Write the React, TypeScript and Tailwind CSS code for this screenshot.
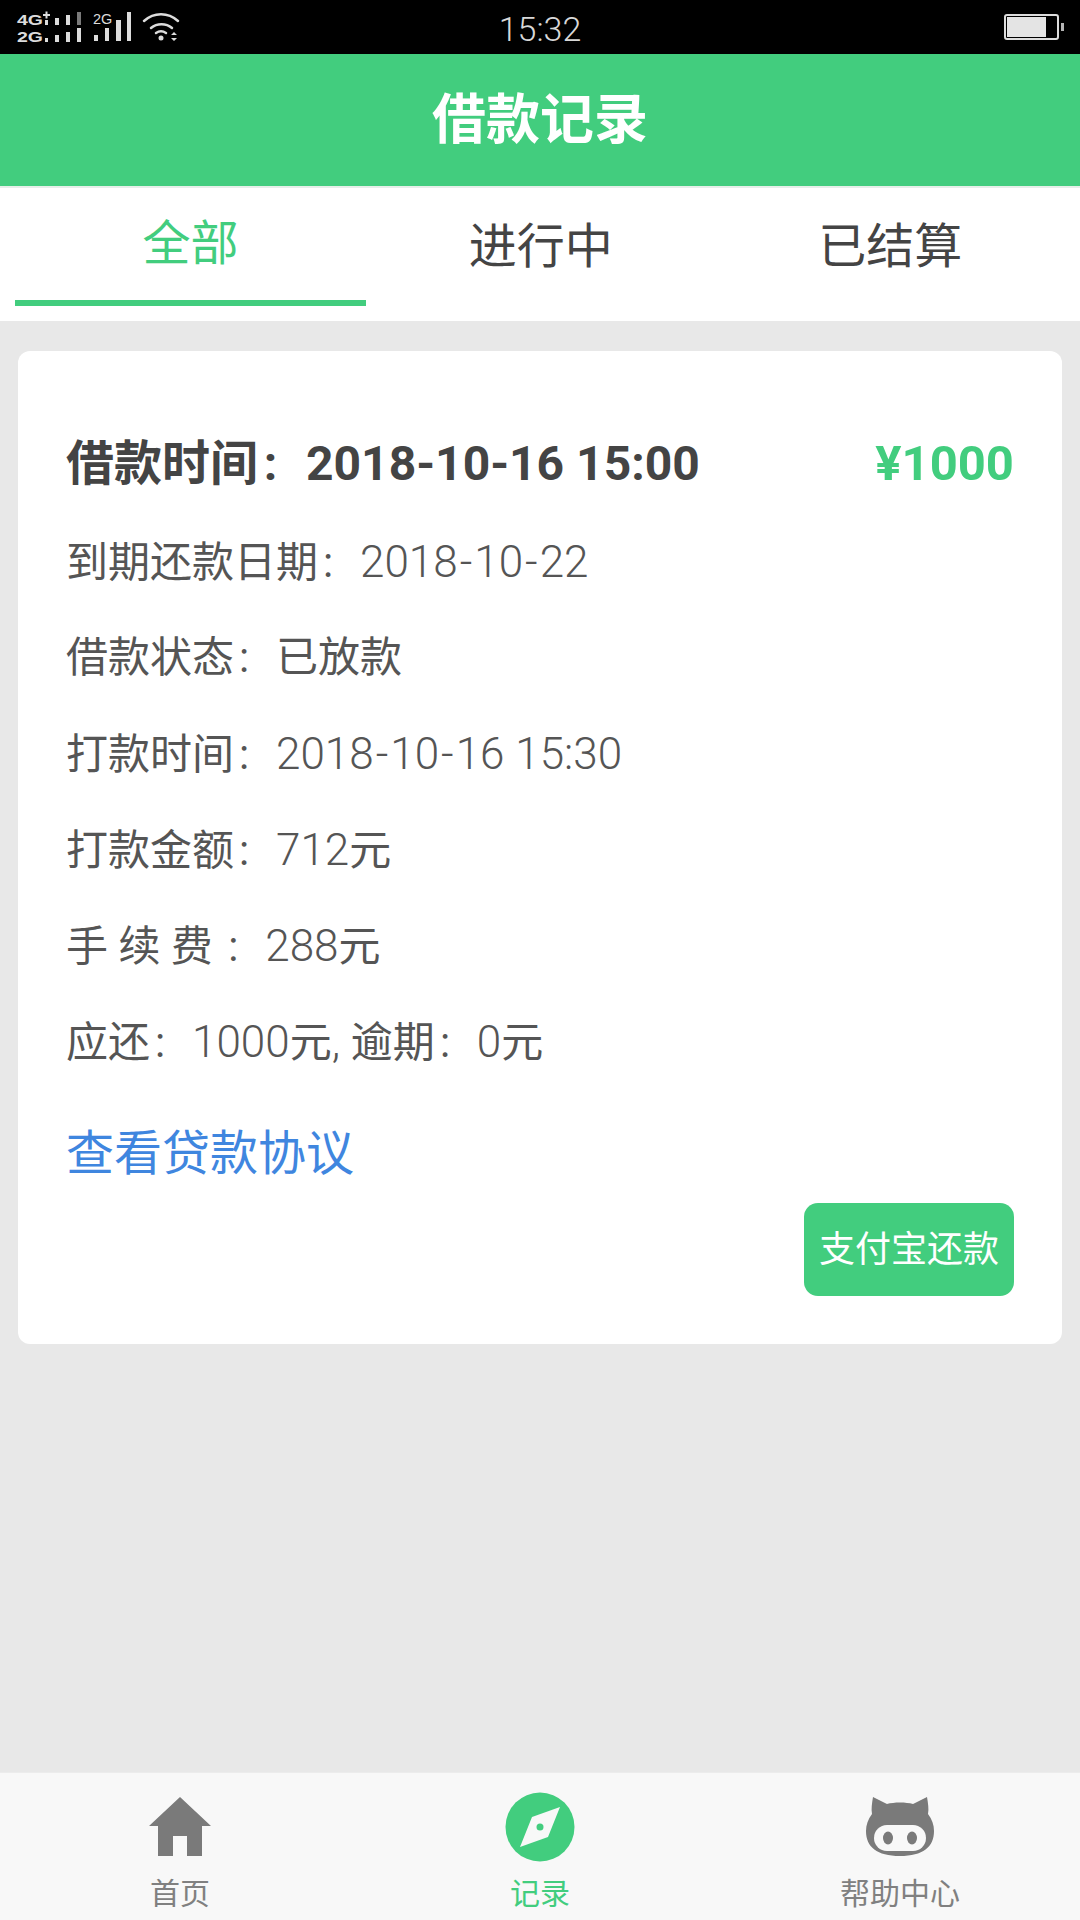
import React from "react";

function Signal() {
  return (
    <svg width="190" height="54" viewBox="0 0 190 54" className="block">
      <g fill="#dcdcdc">
        <text x="17" y="24.500" fontFamily="Liberation Sans" fontWeight="700" fontSize="15" textLength="26" lengthAdjust="spacingAndGlyphs">4G</text>
        <text x="17" y="41.500" fontFamily="Liberation Sans" fontWeight="700" fontSize="15" textLength="26" lengthAdjust="spacingAndGlyphs">2G</text>
        <path d="M43 14h7v2h-7zM45.500 11.500h2v7h-2z" />
        <rect x="45" y="20" width="3" height="5" />
        <rect x="45" y="38" width="3" height="4" />
        <rect x="55" y="18" width="4" height="7" />
        <rect x="66" y="15" width="4" height="10" />
        <rect x="77" y="12" width="4" height="13" fill="#7a7a7a" />
        <rect x="55" y="35" width="4" height="7" />
        <rect x="66" y="32" width="4" height="10" />
        <rect x="77" y="28" width="4" height="14" />
        <text x="93" y="24" fontFamily="Liberation Sans" fontWeight="400" fontSize="14.500">2G</text>
        <rect x="94" y="35" width="4" height="6" />
        <rect x="105" y="28" width="4" height="13" />
        <rect x="116" y="20" width="5" height="21" />
        <rect x="127" y="12" width="4" height="29" />
        <circle cx="161" cy="38" r="2.500" />
        <path d="M171 35l3-3 3 3zM171 38h6l-3 3z" />
      </g>
      <g fill="none" stroke="#dcdcdc" strokeWidth="2.500" strokeLinecap="round">
        <path d="M144 21c10-9 24-9 34 0" />
        <path d="M151 28c6-5 15-5 21 0" />
        <path d="M156 33c3-2 7-2 10 0" />
      </g>
    </svg>
  );
}

function Battery() {
  return (
    <div className="mr-[16px] flex items-center">
      <div className="h-[26px] w-[55px] rounded-[3px] border-2 border-[#dcdcdc] p-[1px]">
        <div className="h-full w-[39px] bg-[#e4e4e4]" />
      </div>
      <div className="ml-[2px] h-[8px] w-[3px] bg-[#b5b5b5]" />
    </div>
  );
}

function Colon() {
  return <span className="inline-block w-[1em] pl-[0.12em]">:</span>;
}

function L({ children }: { children: React.ReactNode }) {
  return <span className="text-[44px] font-light">{children}</span>;
}

function Dash() {
  return <span className="px-[2px]">-</span>;
}

function Row({ children }: { children: React.ReactNode }) {
  return <div className="h-[96px] whitespace-pre text-[42px] leading-[96px] text-[#555555]">{children}</div>;
}

function HomeIcon() {
  return (
    <svg width="64" height="60" viewBox="0 0 64 60" className="block">
      <path fill="#7a7a7a" fillRule="evenodd" d="M32 0 L63 29 H54 V59 H39 V39 H25 V59 H10 V29 H1 Z" />
    </svg>
  );
}

function CompassIcon() {
  return (
    <svg width="70" height="70" viewBox="0 0 70 70" className="block">
      <circle cx="35" cy="35" r="34.500" fill="#42cd7e" />
      <path fill="#f8f8f8" d="M55 15 L43 45 L15 55 L27 25 Z" />
      <circle cx="35" cy="35" r="3.500" fill="#42cd7e" />
    </svg>
  );
}

function CatIcon() {
  return (
    <svg width="70" height="60" viewBox="0 0 70 60" className="block">
      <path
        fill="#7a7a7a"
        d="M8 0 L22 7 C29 5 41 5 48 7 L62 0 C63 6 64 12 63 17 C67 22 69 28 69 34 C69 50 58 59 35 59 C12 59 1 50 1 34 C1 28 3 22 7 17 C6 12 7 6 8 0 Z"
      />
      <rect x="9" y="28" width="52" height="26" rx="13" fill="#f8f8f8" />
      <ellipse cx="23" cy="41" rx="5" ry="6.500" fill="#7a7a7a" />
      <ellipse cx="47" cy="41" rx="5" ry="6.500" fill="#7a7a7a" />
    </svg>
  );
}

export default function App() {
  return (
    <div className="flex h-[1920px] w-[1080px] flex-col bg-[#e8e8e8] font-['Roboto','Noto_Sans_CJK_SC',sans-serif]">
      <div className="flex h-[54px] items-center bg-black">
        <div className="flex-1">
          <Signal />
        </div>
        <div className="pt-[4px] text-[34px] font-light leading-[42px] text-[#d8d8d8]">15:32</div>
        <div className="flex flex-1 justify-end">
          <Battery />
        </div>
      </div>
      <div className="flex h-[132px] items-center justify-center bg-[#42cd7e] text-[54px] font-bold text-white">借款记录</div>
      <div className="flex h-[135px] border-t-2 border-[#e6efe9] bg-white px-[15px]">
        <div className="mb-[15px] flex w-[351px] items-center justify-center border-b-[6px] border-[#42cd7e] text-[48px] text-[#42cd7e]">全部</div>
        <div className="mb-[15px] flex flex-1 items-center justify-center text-[48px] text-[#444444]">进行中</div>
        <div className="mb-[15px] flex flex-1 items-center justify-center text-[48px] text-[#444444]">已结算</div>
      </div>
      <div className="flex-1 px-[18px] pt-[30px]">
        <div className="h-[993px] rounded-[12px] bg-white px-[48px] pt-[65px]">
          <div className="mb-[2px] flex h-[96px] items-center justify-between text-[48px] font-bold text-[#444444]">
            <span>借款时间<Colon />2018-10-16 15:00</span>
            <span className="text-[49px] text-[#42cd7e]">¥1000</span>
          </div>
          <Row>到期还款日期<Colon /><L>2018<Dash />10<Dash />22</L></Row>
          <Row>借款状态<Colon />已放款</Row>
          <Row>打款时间<Colon /><L>2018<Dash />10<Dash />16 15:30</L></Row>
          <Row>打款金额<Colon /><L>712</L>元</Row>
          <Row>手 续 费 <Colon /><L>288</L>元</Row>
          <Row>应还<Colon /><L>1000</L>元<L>, </L>逾期<Colon /><L>0</L>元</Row>
          <div className="flex h-[113px] items-center pt-[15px] text-[48px] text-[#3f86df]">查看贷款协议</div>
          <div className="flex justify-end">
            <div className="flex h-[93px] w-[210px] items-center justify-center rounded-[14px] bg-[#42cd7e] text-[36px] text-white">支付宝还款</div>
          </div>
        </div>
      </div>
      <div className="flex h-[148px] border-t border-[#ececec] bg-[#f8f8f8]">
        <div className="flex w-[360px] flex-col items-center pt-[24px]">
          <HomeIcon />
          <div className="mt-[17px] text-[30px] leading-[40px] text-[#808080]">首页</div>
        </div>
        <div className="flex w-[360px] flex-col items-center pt-[19px]">
          <CompassIcon />
          <div className="mt-[12px] text-[30px] leading-[40px] text-[#42cd7e]">记录</div>
        </div>
        <div className="flex w-[360px] flex-col items-center pt-[24px]">
          <CatIcon />
          <div className="mt-[17px] text-[30px] leading-[40px] text-[#808080]">帮助中心</div>
        </div>
      </div>
    </div>
  );
}
